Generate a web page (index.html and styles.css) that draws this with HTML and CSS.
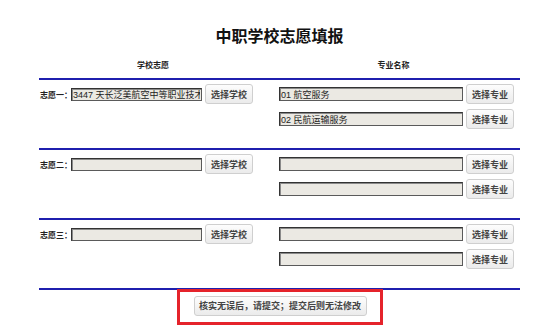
FILE: index.html
```html
<!DOCTYPE html>
<html lang="zh-CN">
<head>
    <meta charset="UTF-8">
    <title>中职学校志愿填报</title>
    <link rel="stylesheet" href="styles.css">
</head>
<body>
    <div class="page">
        <h1 class="title">中职学校志愿填报</h1>
        <div class="head">
            <span class="col-school">学校志愿</span>
            <span class="col-major">专业名称</span>
        </div>

        <!-- 志愿一 -->
        <div class="choice">
            <div class="school">
                <label>志愿一：</label>
                <input class="field school-field" type="text" value="3447 天长泛美航空中等职业技术学校" readonly>
                <button class="btn">选择学校</button>
            </div>
            <div class="majors">
                <div class="major-row">
                    <input class="field major-field" type="text" value="01 航空服务" readonly>
                    <button class="btn">选择专业</button>
                </div>
                <div class="major-row">
                    <input class="field major-field" type="text" value="02 民航运输服务" readonly>
                    <button class="btn">选择专业</button>
                </div>
            </div>
        </div>

        <!-- 志愿二 -->
        <div class="choice">
            <div class="school">
                <label>志愿二：</label>
                <input class="field school-field" type="text" readonly>
                <button class="btn">选择学校</button>
            </div>
            <div class="majors">
                <div class="major-row">
                    <input class="field major-field" type="text" readonly>
                    <button class="btn">选择专业</button>
                </div>
                <div class="major-row">
                    <input class="field major-field" type="text" readonly>
                    <button class="btn">选择专业</button>
                </div>
            </div>
        </div>

        <!-- 志愿三 -->
        <div class="choice">
            <div class="school">
                <label>志愿三：</label>
                <input class="field school-field" type="text" readonly>
                <button class="btn">选择学校</button>
            </div>
            <div class="majors">
                <div class="major-row">
                    <input class="field major-field" type="text" readonly>
                    <button class="btn">选择专业</button>
                </div>
                <div class="major-row">
                    <input class="field major-field" type="text" readonly>
                    <button class="btn">选择专业</button>
                </div>
            </div>
        </div>

        <div class="submit">
            <div class="submit-box">
                <button class="btn btn-submit">核实无误后，请提交；提交后则无法修改</button>
            </div>
        </div>
    </div>
</body>
</html>
```

FILE: styles.css
```css
body {
    margin: 0;
    padding: 0;
    background: #fff;
    font-family: "Liberation Sans", "Noto Sans CJK SC", sans-serif;
    color: #222;
}
.page {
    width: 481px;
    margin-left: 39px;
}
.title {
    margin: 27px 0 0;
    font-size: 16px;
    line-height: 20px;
    font-weight: bold;
    text-align: center;
    color: #111;
}
.head {
    display: grid;
    grid-template-columns: 228px 253px;
    margin-top: 13px;
    height: 18px;
    font-size: 8px;
    line-height: 12px;
    font-weight: bold;
    text-align: center;
    color: #222;
}
.choice {
    display: grid;
    grid-template-columns: 228px 253px;
    height: 64px;
    padding-top: 4px;
    border-top: 2px solid #1f1fae;
}
.school {
    display: flex;
    align-items: center;
    height: 20px;
}
.school label {
    width: 31px;
    padding-left: 1px;
    font-size: 8px;
    font-weight: bold;
    color: #222;
    white-space: nowrap;
}
.field {
    box-sizing: border-box;
    height: 14px;
    margin: 0;
    padding: 0 1px;
    border: 1px solid #5a5a5a;
    border-top-color: #333;
    border-left-color: #333;
    box-shadow: inset 1px 1px 0 #8a8a8a;
    background: #ebe9e3;
    font-family: "Liberation Sans", "Noto Sans CJK SC", sans-serif;
    font-size: 9px;
    color: #222;
    outline: none;
}
.school-field {
    width: 131px;
    height: 13px;
}
.major-field {
    width: 184px;
}
.majors {
    display: flex;
    flex-direction: column;
    gap: 5px;
    padding-left: 12px;
}
.major-row {
    display: flex;
    align-items: center;
    height: 20px;
}
.btn {
    box-sizing: border-box;
    height: 20px;
    margin: 0 0 0 3px;
    padding: 0 5px;
    border: 1px solid #cfcfcf;
    border-radius: 3px;
    background: linear-gradient(#fdfdfd, #ebebeb);
    font-family: "Liberation Sans", "Noto Sans CJK SC", sans-serif;
    font-size: 9px;
    font-weight: bold;
    color: #444;
    cursor: pointer;
}
.submit {
    display: flex;
    justify-content: center;
    border-top: 2px solid #1f1fae;
}
.submit-box {
    margin-top: -1px;
    padding: 3px 13px 6px 14px;
    border: 3px solid #e5232b;
}
.btn-submit {
    margin: 0;
    width: 173px;
    padding: 0;
}
```
